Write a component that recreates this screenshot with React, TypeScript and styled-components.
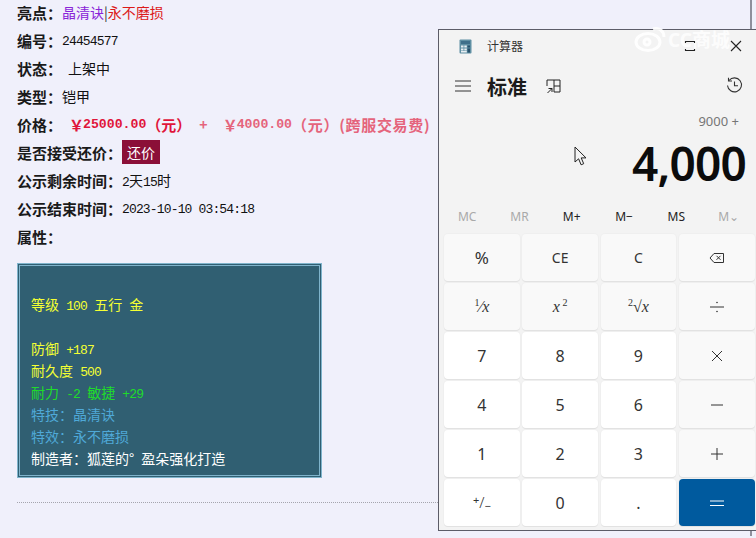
import React from 'react';
import styled, { createGlobalStyle } from 'styled-components';

const GlobalStyle = createGlobalStyle`
  html, body { margin: 0; padding: 0; background: #f0f0fb; overflow: hidden; }
  body { font-family: "Noto Sans CJK SC", "Liberation Sans", sans-serif; }
`;

const Page = styled.div`
  position: relative;
  width: 756px;
  height: 538px;
  overflow: hidden;
  color: #111;
`;

const Content = styled.div`
  width: 733px;
  height: 538px;
  margin-left: 17px;
  border-right: 2px solid #8f8f9c;
`;

const Rows = styled.div`
  display: flex;
  flex-direction: column;
  margin-top: -2px;
`;

const Row = styled.div`
  display: flex;
  align-items: center;
  height: 28px;
  font-size: 14px;
  white-space: nowrap;
`;

const Label = styled.span`
  font-size: 15px;
  font-weight: 700;
  color: #1a1a1a;
`;

const Value = styled.span<{ $indent?: number }>`
  margin-left: ${p => p.$indent || 0}px;
`;

const Tint = styled.span<{ $color: string }>`
  color: ${p => p.$color};
`;

const Mono = styled.span`
  font-family: "Liberation Mono", monospace;
  font-size: 13px;
  letter-spacing: -0.85px;
`;

const CodeValue = styled(Mono)`
  padding-top: 3px;
`;

const Price = styled.span<{ $faded?: boolean }>`
  display: flex;
  align-items: center;
  font-weight: 700;
  font-size: 15px;
  color: ${p => (p.$faded ? '#e5647c' : '#e0153a')};
  margin-left: ${p => (p.$faded ? 0 : 7)}px;
`;

const Yen = styled.span`
  margin-right: -1px;
`;

const PriceNum = styled.span`
  font-family: "Liberation Mono", monospace;
  font-size: 13.2px;
`;

const FeeNote = styled.span`
  letter-spacing: 0.7px;
`;

const Plus = styled.span`
  color: #e5647c;
  font-weight: 700;
  margin: 0 15px 0 8px;
`;

const OfferButton = styled.button`
  width: 38px;
  height: 24px;
  padding: 0;
  border: none;
  background: #8b0f38;
  color: #fff;
  font: 14px "Noto Sans CJK SC", sans-serif;
`;

const AttrBox = styled.div`
  width: 305px;
  height: 215px;
  margin-top: 13px;
  padding: 5px 0 0 11px;
  box-sizing: border-box;
  border: 3px double #7fb4cc;
  background: #305f72;
  font-size: 14px;
  line-height: 22px;
  word-spacing: 4px;
`;

const AttrLine = styled.div<{ $color: string }>`
  height: 22px;
  color: ${p => p.$color};
  white-space: pre;
`;

const Divider = styled.div`
  margin-top: 24px;
  border-top: 1px dotted #a5a5ae;
`;

const Calc = styled.div`
  position: absolute;
  left: 438px;
  top: 29px;
  width: 330px;
  height: 502px;
  box-sizing: border-box;
  border: 1px solid #5c5c68;
  background: #f3f3f3;
  color: #1b1b1b;
  font-family: "Noto Sans", "Noto Sans CJK SC", sans-serif;
`;

const TitleBar = styled.div`
  display: flex;
  align-items: center;
  height: 32px;
  padding-left: 20px;
`;

const Title = styled.span`
  margin-left: 15px;
  font-size: 12px;
  color: #333;
`;

const WindowButton = styled.span<{ $left: number }>`
  position: absolute;
  top: 10px;
  left: ${p => p.$left}px;
  display: flex;
`;

const Watermark = styled.div`
  position: absolute;
  left: 194px;
  top: -5px;
  display: flex;
  align-items: center;
  gap: 1px;
  color: rgba(255, 255, 255, 0.8);
  font-size: 19px;
  font-weight: 700;
  white-space: nowrap;
`;

const Header = styled.div`
  display: flex;
  align-items: center;
  height: 48px;
  padding-left: 16px;
`;

const Heading = styled.span`
  margin-left: 16px;
  margin-right: 19px;
  font-size: 20px;
  font-weight: 700;
  font-family: "Noto Sans CJK SC", sans-serif;
`;

const HistoryIcon = styled.span`
  position: absolute;
  left: 287px;
  top: 47px;
  display: flex;
`;

const Expression = styled.div`
  width: 300px;
  margin-top: 1px;
  height: 20px;
  line-height: 20px;
  text-align: right;
  font-size: 13px;
  color: #767676;
`;

const Display = styled.div`
  width: 307px;
  height: 62px;
  margin-top: 1px;
  line-height: 62px;
  text-align: right;
  font-size: 46px;
  font-weight: 600;
  letter-spacing: -0.8px;
  color: #0c0c0c;
`;

const Cursor = styled.svg`
  position: absolute;
  left: 135px;
  top: 116px;
`;

const MemoryRow = styled.div`
  display: grid;
  grid-template-columns: repeat(6, 52.3px);
  margin: 10px 0 0 2px;
  height: 24px;
  align-items: center;
`;

const MemoryKey = styled.span<{ $off?: boolean }>`
  text-align: center;
  font-size: 12px;
  color: ${p => (p.$off ? '#a9a9a9' : '#222')};
`;

const Keypad = styled.div`
  display: grid;
  grid-template-columns: repeat(4, 75.75px);
  grid-auto-rows: 47px;
  gap: 2px 2.5px;
  margin: 6px 0 0 5px;
`;

const Key = styled.div<{ $kind?: 'num' | 'op' | 'eq' }>`
  display: flex;
  align-items: center;
  justify-content: center;
  border-radius: 4px;
  box-shadow: 0 1px 0 #e2e2e2, 0 0 0 1px #efefef;
  font-size: ${p => (p.$kind === 'num' ? 16 : 14)}px;
  background: ${p => (p.$kind === 'num' ? '#ffffff' : p.$kind === 'eq' ? '#005a9e' : '#f9f9f9')};
  color: ${p => (p.$kind === 'eq' ? '#ffffff' : '#333')};
`;

const Percent = styled.span`
  font-size: 17px;
`;

const MathText = styled.span`
  font-family: "Liberation Serif", serif;
  font-style: italic;
  font-size: 16px;
`;

const Sup = styled.sup`
  font-size: 10px;
  font-style: normal;
  line-height: 0;
`;

const Negate = styled.span`
  display: flex;
  align-items: center;
  font-size: 11px;
  line-height: 1;
`;

const NegateSlash = styled.span`
  font-size: 15px;
  font-weight: 300;
`;

const NegatePlus = styled.span`
  margin-bottom: 6px;
`;

const NegateMinus = styled.span`
  margin-top: 6px;
`;

const attrs: [string, string][] = [
  [' ', '#f4ff33'],
  ['等级 100 五行 金', '#f4ff33'],
  [' ', '#f4ff33'],
  ['防御 +187', '#f4ff33'],
  ['耐久度 500', '#f4ff33'],
  ['耐力 -2 敏捷 +29', '#1fdc2a'],
  ['特技：晶清诀', '#4fa9d8'],
  ['特效：永不磨损', '#4fa9d8'],
  ['制造者：狐莲的° 盈朵强化打造', '#ffffff'],
];

// game text has half width digits next to the CJK, so they go in Mono
const renderAttr = (text: string) =>
  text.split(/([+\-\d]+)/).map((part, i) => (i % 2 ? <Mono key={i}>{part}</Mono> : part));

const CalcLogo = () => (
  <svg width="13" height="15" viewBox="0 0 13 15">
    <rect x="0.5" y="0.5" width="12" height="14" rx="1" fill="#5f8fa3" />
    <rect x="2" y="2" width="9" height="3" fill="#3f6f8a" />
    <rect x="2" y="6.5" width="2.5" height="2" fill="#e8eef2" />
    <rect x="5.3" y="6.5" width="2.5" height="2" fill="#e8eef2" />
    <rect x="8.5" y="6.5" width="2.5" height="2" fill="#27506b" />
    <rect x="2" y="9.5" width="2.5" height="2" fill="#e8eef2" />
    <rect x="5.3" y="9.5" width="2.5" height="2" fill="#e8eef2" />
    <rect x="8.5" y="9.5" width="2.5" height="4" fill="#27506b" />
    <rect x="2" y="12" width="5.8" height="1.5" fill="#e8eef2" />
  </svg>
);

const BackspaceIcon = () => (
  <svg width="16" height="12" viewBox="0 0 16 12" fill="none" stroke="#333" strokeWidth="1">
    <path d="M5 1.5h9.5v9H5L1 6z" />
    <path d="M7.5 3.8l4 4M11.5 3.8l-4 4" />
  </svg>
);

const OpIcon = ({ d, dots, color = '#333' }: { d: string; dots?: boolean; color?: string }) => (
  <svg width="16" height="16" viewBox="0 0 16 16" fill="none" stroke={color} strokeWidth="1">
    <path d={d} />
    {dots && (
      <>
        <circle cx="8" cy="3.5" r="0.8" fill={color} stroke="none" />
        <circle cx="8" cy="12.5" r="0.8" fill={color} stroke="none" />
      </>
    )}
  </svg>
);

export default function App() {
  return (
    <Page>
      <GlobalStyle />
      <Content>
        <Rows>
          <Row>
            <Label>亮点：</Label>
            <Value>
              <Tint $color="#8a24d8">晶清诀</Tint>
              <Tint $color="#333">|</Tint>
              <Tint $color="#dc1a1a">永不磨损</Tint>
            </Value>
          </Row>
          <Row>
            <Label>编号：</Label>
            <CodeValue>24454577</CodeValue>
          </Row>
          <Row>
            <Label>状态：</Label>
            <Value $indent={6}>上架中</Value>
          </Row>
          <Row>
            <Label>类型：</Label>
            <Value>铠甲</Value>
          </Row>
          <Row>
            <Label>价格：</Label>
            <Price>
              <Yen>￥</Yen><PriceNum>25000.00</PriceNum>（元）
            </Price>
            <Plus>+</Plus>
            <Price $faded>
              <Yen>￥</Yen><PriceNum>4000.00</PriceNum><FeeNote>（元）(跨服交易费)</FeeNote>
            </Price>
          </Row>
          <Row>
            <Label>是否接受还价：</Label>
            <OfferButton>还价</OfferButton>
          </Row>
          <Row>
            <Label>公示剩余时间：</Label>
            <Value><Mono>2</Mono>天<Mono>15</Mono>时</Value>
          </Row>
          <Row>
            <Label>公示结束时间：</Label>
            <CodeValue>2023-10-10 03:54:18</CodeValue>
          </Row>
          <Row>
            <Label>属性：</Label>
          </Row>
        </Rows>
        <AttrBox>
          {attrs.map(([text, color], i) => (
            <AttrLine key={i} $color={color}>{renderAttr(text)}</AttrLine>
          ))}
        </AttrBox>
        <Divider />
      </Content>

      <Calc>
        <TitleBar>
          <CalcLogo />
          <Title>计算器</Title>
        </TitleBar>
        <Watermark>
          <svg width="34" height="28" viewBox="0 0 34 28" fill="none" stroke="rgba(255,255,255,0.9)" strokeWidth="3">
            <ellipse cx="15" cy="17" rx="12" ry="8.5" />
            <circle cx="14" cy="17" r="3" />
            <path d="M20 4c6-2 11 2 11 8" />
          </svg>
          CC商城
        </Watermark>
        <WindowButton $left={245}>
          <svg width="12" height="12" viewBox="0 0 12 12" fill="none" stroke="#222" strokeWidth="1.1">
            <path d="M1.5 3V1.5h9V3M1.5 9v1.5h9V9" />
          </svg>
        </WindowButton>
        <WindowButton $left={291}>
          <svg width="12" height="12" viewBox="0 0 12 12" fill="none" stroke="#222" strokeWidth="1.1">
            <path d="M1 1l10 10M11 1L1 11" />
          </svg>
        </WindowButton>

        <Header>
          <svg width="16" height="12" viewBox="0 0 16 12" stroke="#333" strokeWidth="1">
            <path d="M0 1h16M0 6h16M0 11h16" />
          </svg>
          <Heading>标准</Heading>
          <svg width="15" height="15" viewBox="0 0 15 15" fill="none" stroke="#222" strokeWidth="1">
            <path d="M1 7V1h13v12H8V1M8 7h6" />
            <path d="M1.5 14L6 9.5M2.5 9.5H6V13" />
          </svg>
        </Header>
        <HistoryIcon>
          <svg width="17" height="17" viewBox="0 0 17 17" fill="none" stroke="#333" strokeWidth="1.1">
            <path d="M3 3.5A7 7 0 1 1 1.5 8.5" />
            <path d="M2.5 0.8V4H6M8.5 4.5v4.3h3.5" />
          </svg>
        </HistoryIcon>

        <Expression>9000 +</Expression>
        <Display>4,000</Display>
        <Cursor width="13" height="20" viewBox="0 0 13 20">
          <path d="M1 1v15l3.6-3.2 2.5 6 2.6-1.1-2.5-5.8H12z" fill="#f3f3f3" stroke="#222" strokeWidth="1" />
        </Cursor>

        <MemoryRow>
          <MemoryKey $off>MC</MemoryKey>
          <MemoryKey $off>MR</MemoryKey>
          <MemoryKey>M+</MemoryKey>
          <MemoryKey>M−</MemoryKey>
          <MemoryKey>MS</MemoryKey>
          <MemoryKey $off>M⌄</MemoryKey>
        </MemoryRow>

        <Keypad>
          <Key><Percent>%</Percent></Key>
          <Key>CE</Key>
          <Key>C</Key>
          <Key><BackspaceIcon /></Key>

          <Key><MathText><Sup>1</Sup>⁄x</MathText></Key>
          <Key><MathText>x<Sup> 2</Sup></MathText></Key>
          <Key><MathText><Sup>2</Sup>√x</MathText></Key>
          <Key><OpIcon d="M1 8h14" dots /></Key>

          <Key $kind="num">7</Key>
          <Key $kind="num">8</Key>
          <Key $kind="num">9</Key>
          <Key><OpIcon d="M3 3l10 10M13 3L3 13" /></Key>

          <Key $kind="num">4</Key>
          <Key $kind="num">5</Key>
          <Key $kind="num">6</Key>
          <Key><OpIcon d="M2 8h12" /></Key>

          <Key $kind="num">1</Key>
          <Key $kind="num">2</Key>
          <Key $kind="num">3</Key>
          <Key><OpIcon d="M2 8h12M8 2v12" /></Key>

          <Key $kind="num">
            <Negate>
              <NegatePlus>+</NegatePlus>
              <NegateSlash>/</NegateSlash>
              <NegateMinus>−</NegateMinus>
            </Negate>
          </Key>
          <Key $kind="num">0</Key>
          <Key $kind="num">.</Key>
          <Key $kind="eq"><OpIcon d="M1 6h14M1 10.5h14" color="#fff" /></Key>
        </Keypad>
      </Calc>
    </Page>
  );
}
